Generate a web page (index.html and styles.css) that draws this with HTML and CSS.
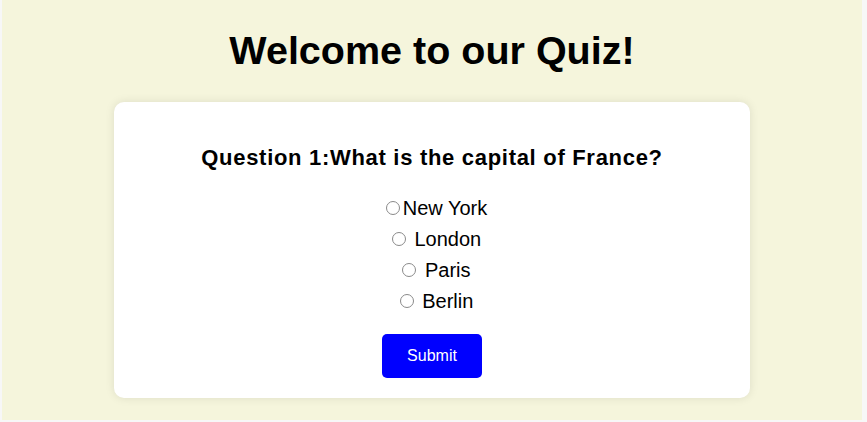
FILE: index.html
```html
<!DOCTYPE html>
<html>
<head>
<meta charset="utf-8">
<link rel="stylesheet" href="styles.css">
</head>
<body>
<div class="page">
  <h1 class="title">Welcome to our Quiz!</h1>
  <div class="card">
    <h2 class="question">Question 1:What is the capital of France?</h2>
    <form class="options">
      <label class="option"><input type="radio" name="q1">New York</label>
      <label class="option"><input type="radio" name="q1"> London</label>
      <label class="option"><input type="radio" name="q1"> Paris</label>
      <label class="option"><input type="radio" name="q1"> Berlin</label>
      <button type="button" class="submit">Submit</button>
    </form>
  </div>
</div>
</body>
</html>
```
FILE: styles.css
```css
html, body {
  margin: 0;
  height: 100%;
}
body {
  background: #f7f7f7;
  padding: 0 5px 2px 2px;
  box-sizing: border-box;
  font-family: "Liberation Sans", Arial, sans-serif;
}
.page {
  background: #f5f5dc;
  height: 100%;
  display: flex;
  flex-direction: column;
  align-items: center;
  overflow: hidden;
}
.title {
  font-size: 39.5px;
  font-weight: bold;
  margin: 28px 0 29px;
  color: #000;
}
.card {
  width: 636px;
  box-sizing: border-box;
  background: #fff;
  border-radius: 10px;
  box-shadow: 0 0 10px rgba(0, 0, 0, 0.1);
  padding: 43px 20px 20px;
  display: flex;
  flex-direction: column;
  align-items: center;
}
.question {
  font-size: 22px;
  letter-spacing: 0.7px;
  font-weight: bold;
  margin: 0 0 22px;
}
.options {
  display: flex;
  flex-direction: column;
  align-items: center;
}
.option {
  font-size: 20px;
  line-height: 31px;
  padding-left: 4px;
}
.option input {
  appearance: none;
  -webkit-appearance: none;
  box-sizing: border-box;
  width: 14px;
  height: 14px;
  border: 1px solid #8a8a8a;
  border-radius: 50%;
  background: #fff;
  margin: 2px 3px 0 5px;
}
.submit {
  margin-top: 17px;
  width: 100px;
  height: 44px;
  background: #0000ff;
  color: #fff;
  border: none;
  border-radius: 5px;
  font-family: "Liberation Sans", Arial, sans-serif;
  font-size: 16px;
}
```
